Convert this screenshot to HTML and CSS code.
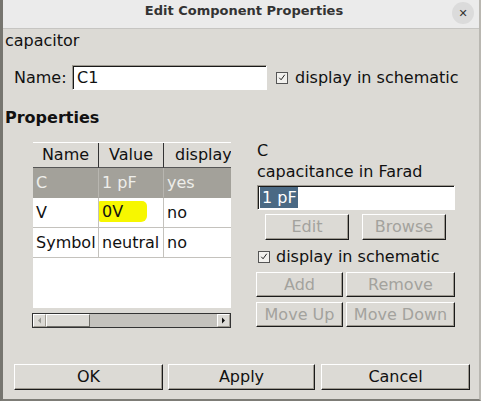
FILE: index.html
```html
<!DOCTYPE html>
<html lang="en">
<head>
    <meta charset="UTF-8">
    <title>Edit Component Properties</title>
    <link rel="stylesheet" href="styles.css">
</head>
<body>
    <div class="window">
        <!-- Title bar -->
        <div class="titlebar">
            <span class="title">Edit Component Properties</span>
            <span class="close">&#x2715;</span>
        </div>

        <div class="content">
            <div class="kind">capacitor</div>

            <div class="name-row">
                <span class="label">Name:</span>
                <div class="entry name-entry">C1</div>
                <span class="check"><svg width="11" height="11" viewBox="0 0 11 11"><path d="M2.5 5.8 L4.5 8 L8.5 2.5" fill="none" stroke="#222" stroke-width="1.1"/></svg></span>
                <span class="check-label">display in schematic</span>
            </div>

            <div class="section">Properties</div>

            <div class="middle">
                <!-- Property table -->
                <div class="table-box">
                    <div class="table">
                        <div class="row head">
                            <div class="cell">Name</div>
                            <div class="cell">Value</div>
                            <div class="cell">display</div>
                        </div>
                        <div class="row selected">
                            <div class="cell">C</div>
                            <div class="cell">1 pF</div>
                            <div class="cell">yes</div>
                        </div>
                        <div class="row">
                            <div class="cell">V</div>
                            <div class="cell"><span class="mark">0V</span></div>
                            <div class="cell">no</div>
                        </div>
                        <div class="row">
                            <div class="cell">Symbol</div>
                            <div class="cell">neutral</div>
                            <div class="cell">no</div>
                        </div>
                    </div>
                    <div class="hscroll">
                        <span class="arrow"><svg width="5" height="7" viewBox="0 0 5 7"><path d="M4 0.5 L1 3.5 L4 6.5 Z" fill="#9a9a94"/></svg></span>
                        <span class="thumb"></span>
                        <span class="trough"></span>
                        <span class="arrow"><svg width="5" height="7" viewBox="0 0 5 7"><path d="M1 0.5 L4 3.5 L1 6.5 Z" fill="#111"/></svg></span>
                    </div>
                </div>

                <!-- Selected property editor -->
                <div class="editor">
                    <div class="prop-name">C</div>
                    <div class="prop-desc">capacitance in Farad</div>
                    <div class="entry value-entry"><span class="sel">1 pF</span></div>
                    <div class="btn-row edit-row">
                        <button class="btn disabled w84">Edit</button>
                        <button class="btn disabled w84">Browse</button>
                    </div>
                    <div class="check-row">
                        <span class="check"><svg width="11" height="11" viewBox="0 0 11 11"><path d="M2.5 5.8 L4.5 8 L8.5 2.5" fill="none" stroke="#222" stroke-width="1.1"/></svg></span>
                        <span class="check-label">display in schematic</span>
                    </div>
                    <div class="btn-row tight">
                        <button class="btn disabled w87">Add</button>
                        <button class="btn disabled w109">Remove</button>
                    </div>
                    <div class="btn-row tight move-row">
                        <button class="btn disabled w87">Move Up</button>
                        <button class="btn disabled w109">Move Down</button>
                    </div>
                </div>
            </div>

            <div class="bottom-row">
                <button class="btn big">OK</button>
                <button class="btn mid">Apply</button>
                <button class="btn big">Cancel</button>
            </div>
        </div>
    </div>
</body>
</html>
```

FILE: styles.css
```css
* { margin: 0; padding: 0; box-sizing: border-box; }

body {
    font-family: "DejaVu Sans", "Noto Sans", sans-serif;
    font-size: 16px;
    color: #111;
    background: #6f6e68;
}

.window {
    width: 481px;
    height: 401px;
    background: #dcdad5;
    border-left: 3px solid #76756f;
    border-right: 2px solid #b9b7b1;
    border-bottom: 2px solid #7d7c76;
    overflow: hidden;
}

.titlebar {
    height: 29px;
    background: #ebebeb;
    border-bottom: 1px solid #c6c5c2;
    display: flex;
    align-items: center;
    justify-content: center;
    position: relative;
}

.title {
    font-weight: bold;
    font-size: 13px;
    color: #333;
    padding-bottom: 7px;
    margin-left: 6px;
}

.close {
    position: absolute;
    left: 449px;
    top: 2px;
    width: 22px;
    height: 22px;
    border-radius: 50%;
    background: #dbdbdb;
    color: #333;
    font-size: 11px;
    display: flex;
    align-items: center;
    justify-content: center;
}

.content { padding-left: 2px; }

.kind {
    line-height: 19px;
    margin-top: 2px;
}

.name-row {
    display: flex;
    align-items: center;
    margin-top: 15px;
    margin-left: 9px;
    height: 25px;
}

.label { width: 58px; }

.entry {
    background: #fff;
    border: 1px solid;
    border-color: #9e9a91 #fff #fff #9e9a91;
    box-shadow: inset 1px 1px #1a1a1a;
    height: 25px;
    line-height: 23px;
    padding-left: 4px;
}

.name-entry { width: 195px; }

.check {
    width: 12px;
    height: 12px;
    border: 1px solid #555;
    background: #f2f1ee;
    display: inline-flex;
    align-items: center;
    justify-content: center;
}

.name-row .check { margin-left: 9px; }

.check-label { margin-left: 7px; line-height: 19px; }

.section {
    font-weight: bold;
    line-height: 19px;
    margin-top: 18px;
}

.middle {
    display: flex;
    margin-top: 14px;
    margin-left: 28px;
}

.table-box {
    width: 198px;
    margin-top: 1px;
}

.table {
    background: #fff;
    height: 166px;
    overflow: hidden;
}

.row {
    display: grid;
    grid-template-columns: 66px 65px 67px;
    height: 30px;
}

.cell {
    padding-left: 3px;
    line-height: 29px;
    white-space: nowrap;
    overflow: hidden;
    border-bottom: 1px solid #c4c2bd;
    border-right: 1px solid #c4c2bd;
}

.row .cell:last-child { border-right: none; }

.head {
    height: 26px;
    background: #dcdad5;
    border-top: 1px solid #fff;
}

.head .cell {
    line-height: 24px;
    border-bottom: 1px solid #555;
    border-right: 1px solid #333;
    padding-left: 0;
    text-align: center;
}

.head .cell:last-child {
    border-right: none;
    text-align: left;
    padding-left: 11px;
}

.selected { background: #a3a19a; color: #eeeeea; }
.selected .cell { border-color: #a3a19a; border-right-color: #b8b6b0; }

.mark {
    display: inline-block;
    background: #f7f700;
    height: 21px;
    line-height: 21px;
    width: 48px;
    margin-left: -3px;
    padding-left: 3px;
    margin-top: 3px;
    vertical-align: top;
    border-radius: 1px 5px 6px 2px;
}

.hscroll {
    margin-top: 5px;
    margin-left: -1px;
    height: 15px;
    border: 1px solid #333;
    display: flex;
    background: #c4c2bd;
}

.arrow {
    width: 13px;
    background: #dcdad5;
    border: 1px solid;
    border-color: #fff #9e9a91 #9e9a91 #fff;
    display: flex;
    align-items: center;
    justify-content: center;
}

.thumb {
    width: 44px;
    background: #dcdad5;
    border: 1px solid;
    border-color: #fff #6f6e68 #6f6e68 #fff;
}

.trough { flex: 1; }

.editor {
    width: 198px;
    margin-left: 26px;
}

.prop-name, .prop-desc { line-height: 19px; }
.prop-desc { margin-top: 2px; }

.value-entry {
    margin-top: 4px;
    width: 198px;
    padding-left: 2px;
}

.sel {
    background: #4a6984;
    color: #fff;
    padding: 1px 1px 1px 2px;
}

.btn-row { display: flex; }

.edit-row {
    margin-top: 4px;
    margin-left: 8px;
    gap: 13px;
}

.tight { gap: 3px; margin-left: -1px; margin-top: 6px; }
.move-row { margin-top: 5px; }

.check-row {
    display: flex;
    align-items: center;
    margin-top: 7px;
    margin-left: 1px;
    height: 19px;
}

.check-row .check-label { margin-left: 6px; }

.btn {
    font-family: inherit;
    font-size: 16px;
    color: #111;
    background: #dcdad5;
    height: 26px;
    border: 1px solid;
    border-color: #fff #1a1a1a #1a1a1a #fff;
    box-shadow: inset -1px -1px #9e9a91;
    line-height: 22px;
}

.btn.disabled { color: #a3a29d; }

.w84 { width: 84px; }
.w87 { width: 87px; }
.w109 { width: 109px; }

.tight .btn { height: 25px; }

.bottom-row {
    display: flex;
    gap: 5px;
    margin-top: 36px;
    margin-left: 9px;
}

.big { width: 149px; }
.mid { width: 147px; margin-right: 1px; }
```
